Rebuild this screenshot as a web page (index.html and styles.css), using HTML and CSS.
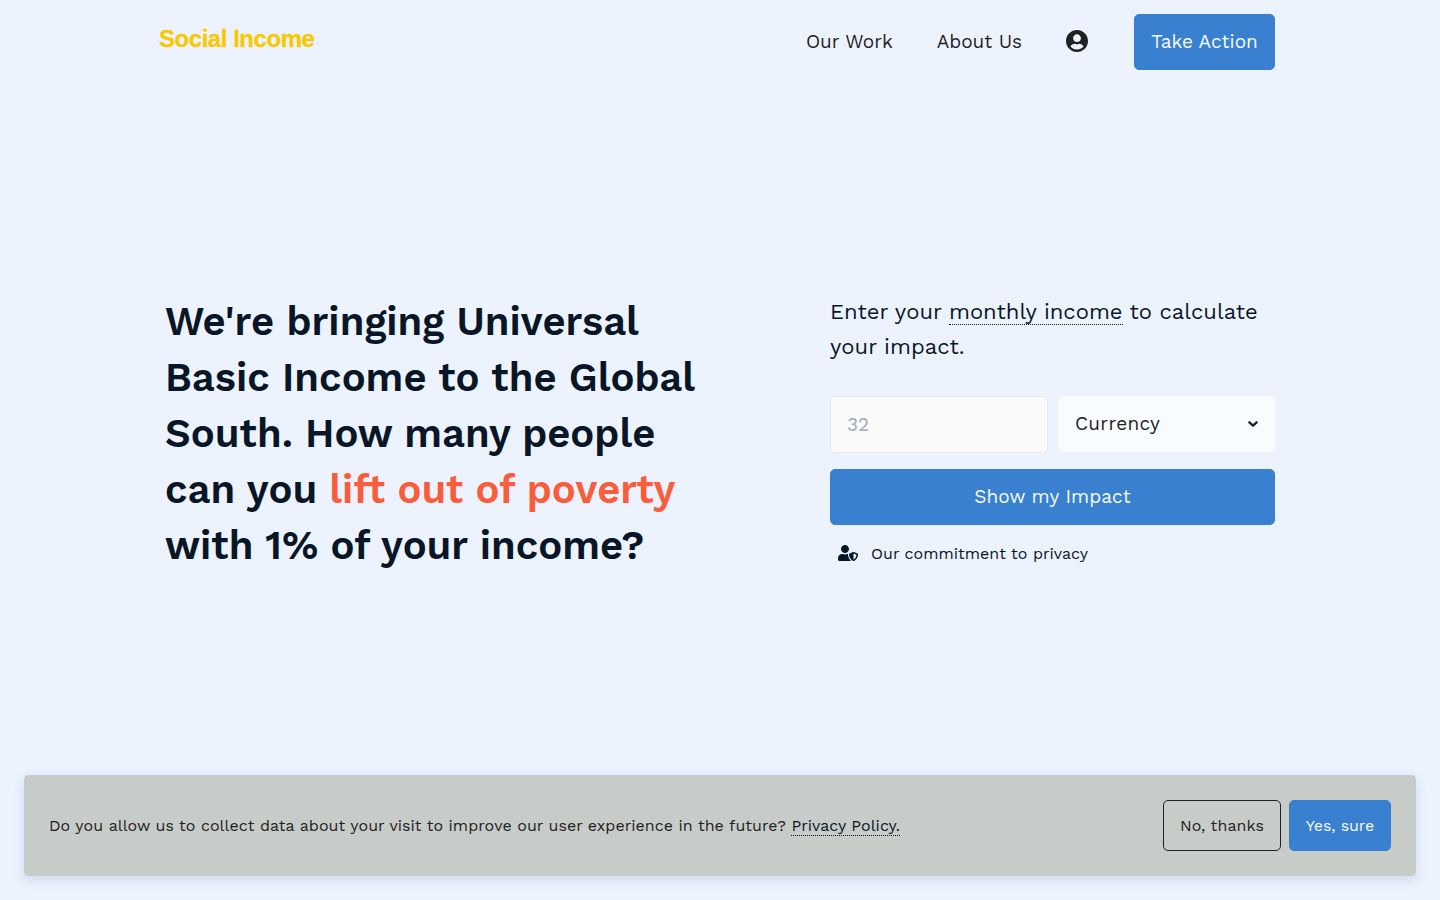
FILE: index.html
```
<!DOCTYPE html>
<html lang="en">
<head>
<meta charset="utf-8">
<title>Social Income</title>
<link rel="stylesheet" href="styles.css">
</head>
<body>
<header class="header container">
  <a class="logo">Social Income</a>
  <nav class="nav">
    <a class="nav-link">Our Work</a>
    <a class="nav-link">About Us</a>
    <a class="nav-user" aria-label="Account"><svg viewBox="0 8 496 496" width="22" height="22" fill="currentColor"><path d="M248 8C111 8 0 119 0 256s111 248 248 248 248-111 248-248S385 8 248 8zm0 96c48.6 0 88 39.4 88 88s-39.4 88-88 88-88-39.4-88-88 39.4-88 88-88zm0 344c-58.7 0-111.3-26.6-146.5-68.2 18.8-35.4 55.6-59.8 98.5-59.8 2.4 0 4.8.4 7.1 1.1 13 4.2 26.6 6.9 40.9 6.9 14.3 0 28-2.7 40.9-6.9 2.3-.7 4.7-1.1 7.1-1.1 42.9 0 79.7 24.4 98.5 59.8C359.3 421.4 306.7 448 248 448z"/></svg></a>
    <button class="btn btn-primary nav-cta">Take Action</button>
  </nav>
</header>
<main class="hero container">
  <h1 class="headline">We're bringing Universal Basic Income to the Global South. How many people can you <span class="accent">lift out of poverty</span> with 1% of your income?</h1>
  <section class="calculator">
    <p class="lead">Enter your <span class="dotted">monthly income</span> to calculate your impact.</p>
    <div class="fields">
      <input class="amount" type="text" placeholder="32">
      <button class="currency"><span>Currency</span><svg viewBox="0 0 10 8" width="10" height="8" fill="none" stroke="currentColor" stroke-width="2.3" stroke-linecap="round" stroke-linejoin="round"><path d="M1.4 2.3 5 5.7l3.6-3.4"/></svg></button>
    </div>
    <button class="btn btn-primary submit">Show my Impact</button>
    <div class="privacy">
      <svg viewBox="0 0 640 512" width="20" height="16" fill="currentColor"><path d="M622.3 271.1l-115.2-45c-4.1-1.6-12.6-3.7-22.2 0l-115.2 45c-10.7 4.2-17.7 14-17.7 24.9 0 111.6 68.7 188.8 132.9 213.9 9.6 3.7 18 1.6 22.2 0C558.4 489.9 640 420.5 640 296c0-10.9-7-20.7-17.7-24.9zM496 462.4V273.3l95.5 37.3c-5.6 87.1-60.9 135.4-95.5 151.8zM224 256c70.7 0 128-57.3 128-128S294.7 0 224 0 96 57.3 96 128s57.3 128 128 128zm96 40c0-2.5.8-4.8 1.1-7.2-2.5-.1-4.9-.8-7.5-.8h-16.7c-22.2 10.2-46.9 16-72.9 16s-50.6-5.8-72.9-16h-16.7C60.2 288 0 348.2 0 422.4V464c0 26.5 21.5 48 48 48h352c6.8 0 13.3-1.5 19.2-4-54-42.9-99.2-116.7-99.2-212z"/></svg>
      <span>Our commitment to privacy</span>
    </div>
  </section>
</main>
<aside class="cookie">
  <p class="cookie-text">Do you allow us to collect data about your visit to improve our user experience in the future? <a class="dotted">Privacy Policy.</a></p>
  <div class="cookie-actions">
    <button class="btn btn-small btn-outline">No, thanks</button>
    <button class="btn btn-small btn-primary btn-accept">Yes, sure</button>
  </div>
</aside>
</body>
</html>
```
FILE: styles.css
```
* { box-sizing: border-box; }

body {
  margin: 0;
  height: 100vh;
  display: flex;
  flex-direction: column;
  overflow: hidden;
  background: #ecf3ff;
  color: #081626;
  font: 400 16px/24px "Work Sans", Inter, sans-serif;
}

p, h1 { margin: 0; }
svg { display: block; flex: none; }

.container { width: 1110px; margin: 0 auto; }

.header {
  height: 84px;
  display: flex;
  align-items: center;
  justify-content: space-between;
  color: #1f2123;
}

.logo {
  margin: -6px 0 0 -6px;
  color: #fac800;
  font: 700 24px/28px "Liberation Sans", sans-serif;
  letter-spacing: -0.46px;
  -webkit-text-stroke: 0.3px #fac800;
}

.nav { display: flex; align-items: center; }

.nav-link {
  margin-right: 44px;
  font-size: 19px;
  line-height: 28px;
}

.nav-user { margin: -2px 46px 0 0; }

.btn {
  padding: 0 16px;
  border: 1px solid transparent;
  border-radius: 5px;
  font: 400 19px/28px "Work Sans", Inter, sans-serif;
  height: 56px;
}

.btn-primary { background: #3980d0; border-color: #3980d0; color: #f8fbff; }
.btn-outline { background: transparent; border-color: #1f2123; color: #1f2123; }
.btn-small { width: 118px; height: 51px; padding: 0; font-size: 16px; letter-spacing: 0.08px; }
.btn-accept { width: 102px; letter-spacing: -0.1px; }

.nav-cta { width: 141px; padding: 0; }

.hero {
  flex: 1;
  display: flex;
  justify-content: space-between;
  padding-top: 210px;
}

.headline {
  width: 555px;
  font-size: 40px;
  line-height: 56px;
  font-weight: 600;
  letter-spacing: -0.01px;
}

.accent { color: #fa5d3c; }

.calculator { width: 445px; }

.lead { font-size: 22px; line-height: 35px; }

.dotted { border-bottom: 1px dotted currentColor; }

.fields {
  display: grid;
  grid-template-columns: 218px 217px;
  gap: 10px;
  align-items: start;
  margin-top: 32px;
}

.amount {
  width: 100%;
  height: 57px;
  padding: 0 16px;
  border: 1px solid #e6e9f2;
  border-radius: 5px;
  background: #fafafa;
  font: 400 19px/28px "Work Sans", Inter, sans-serif;
}

.amount::placeholder { color: #9ca9b6; opacity: 1; }

.currency {
  display: flex;
  align-items: center;
  justify-content: space-between;
  height: 56px;
  padding: 0 17px;
  border: 0;
  border-radius: 5px;
  background: #f8fbff;
  color: #1f2123;
  font: 400 19px/28px "Work Sans", Inter, sans-serif;
  letter-spacing: 0.3px;
}

.currency svg { margin-top: -1px; }

.submit { display: block; width: 100%; margin-top: 16px; letter-spacing: 0.08px; }

.privacy {
  display: flex;
  align-items: flex-start;
  gap: 13px;
  margin: 17px 0 0 8px;
  letter-spacing: 0.03px;
}

.privacy svg { margin-top: 3px; }

.cookie {
  display: flex;
  align-items: center;
  justify-content: space-between;
  height: 101px;
  margin: 0 24px 24px;
  padding: 0 24px;
  border: 1px solid #c8cddc;
  border-radius: 4px;
  background: #c8ccc8;
  color: #1f2123;
  box-shadow: 0 4px 12px rgba(60, 50, 90, 0.14);
}

.cookie-text { letter-spacing: 0.036px; }
.cookie-text .dotted { color: #081626; }
.cookie-actions { display: flex; gap: 8px; }
```
